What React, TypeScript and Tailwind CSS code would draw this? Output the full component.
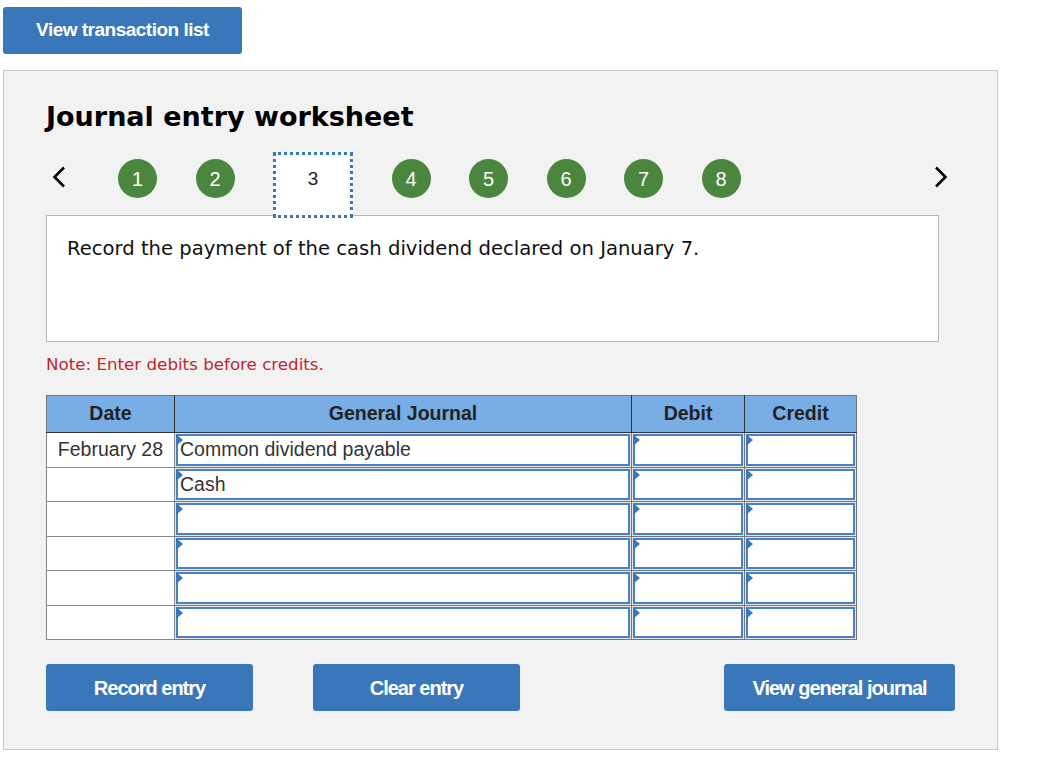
import React from "react"

const steps = [1, 2, 3, 4, 5, 6, 7, 8]

const rows = [
  { date: "February 28", account: "Common dividend payable" },
  { date: "", account: "Cash" },
  { date: "", account: "" },
  { date: "", account: "" },
  { date: "", account: "" },
  { date: "", account: "" },
]

function Field({ text }: { text?: string }) {
  return (
    <div className="relative h-full border-2 border-[#4a80c4] bg-white">
      <span className="absolute left-[-2px] top-[-2px] h-0 w-0 border-y-[6px] border-l-[7px] border-y-transparent border-l-[#3a76ba]" />
      {text && <span className="block pl-[2px] leading-[27px]">{text}</span>}
    </div>
  )
}

function Chevron({ dir }: { dir: "left" | "right" }) {
  return (
    <svg width="16" height="22" viewBox="0 0 16 22" fill="none" stroke="#000" strokeWidth="2.6">
      {dir === "left" ? <path d="M13 1.5 3.5 11l9.5 9.5" /> : <path d="M3 1.5 12.5 11 3 20.5" />}
    </svg>
  )
}

export default function App() {
  return (
    <div className="min-h-screen bg-white pl-[3px] pt-[7px] font-['Liberation_Sans',Arial,sans-serif] text-[#222]">
      <button className="h-[47px] w-[239px] rounded-[3px] bg-[#3a77ba] text-[19px] font-bold tracking-[-0.5px] text-white">
        View transaction list
      </button>

      <div className="mt-[16px] h-[680px] w-[995px] border border-[#c8c8c8] bg-[#f2f2f2] pl-[42px] pt-[26px]">
        <h1 className="font-['DejaVu_Sans',Verdana,sans-serif] text-[27px] font-bold leading-[40px] text-black">
          Journal entry worksheet
        </h1>

        <div className="mt-[15px] flex h-[66px] w-[900px] items-start">
          <span className="ml-[5px] mt-[14px] w-[67px]">
            <Chevron dir="left" />
          </span>
          <div className="flex items-start gap-[38.5px]">
            {steps.map((n) =>
              n === 3 ? (
                <div
                  key={n}
                  className="flex h-[66px] w-[80px] justify-center border-[3px] border-dotted border-[#3a77ba] bg-white pt-[13px] text-[19px] leading-[22px] text-[#222]"
                >
                  3
                </div>
              ) : (
                <span
                  key={n}
                  className="mt-[7px] flex h-[39px] w-[39px] items-center justify-center rounded-full bg-[#4b863f] text-[20px] text-white"
                >
                  {n}
                </span>
              )
            )}
          </div>
          <span className="ml-auto mr-[-3px] mt-[14px]">
            <Chevron dir="right" />
          </span>
        </div>

        <div className="mt-[-3px] h-[127px] w-[893px] border border-[#b8b8b8] bg-white pl-[20px] pt-[20px] font-['DejaVu_Sans',Verdana,sans-serif] text-[19.6px] leading-[26px] text-[#111]">
          Record the payment of the cash dividend declared on January 7.
        </div>

        <p className="mt-[10px] font-['DejaVu_Sans',Verdana,sans-serif] text-[16.7px] leading-[24px] text-[#c0272d]">
          Note: Enter debits before credits.
        </p>

        <table className="mt-[19px] border-collapse border border-[#777] text-[19.5px]">
          <thead>
            <tr className="h-[37px] bg-[#79ade5] font-bold text-[#222]">
              <th className="w-[128px] border-r border-b border-[#333]">Date</th>
              <th className="w-[457px] border-r border-b border-[#333]">General Journal</th>
              <th className="w-[113px] border-r border-b border-[#333]">Debit</th>
              <th className="w-[112px] border-b border-[#333]">Credit</th>
            </tr>
          </thead>
          <tbody>
            {rows.map((r, i) => (
              <tr key={i} className="h-[34.5px]">
                <td className="border border-[#888] bg-white pr-[11px] text-right leading-none text-[#333]">{r.date}</td>
                <td className="h-[34.5px] border border-[#777] bg-[#e6e6e6] p-[1px] text-[#333]">
                  <Field text={r.account} />
                </td>
                <td className="h-[34.5px] border border-[#777] bg-[#e6e6e6] p-[1px]">
                  <Field />
                </td>
                <td className="h-[34.5px] border border-[#777] bg-[#e6e6e6] p-[1px]">
                  <Field />
                </td>
              </tr>
            ))}
          </tbody>
        </table>

        <div className="mt-[24px] flex w-[909px] text-[20px] font-bold tracking-[-1px] text-white">
          <button className="h-[47px] w-[207px] rounded-[3px] bg-[#3a77ba]">Record entry</button>
          <button className="ml-[60px] h-[47px] w-[207px] rounded-[3px] bg-[#3a77ba]">Clear entry</button>
          <button className="ml-auto h-[47px] w-[231px] rounded-[3px] bg-[#3a77ba]">View general journal</button>
        </div>
      </div>
    </div>
  )
}
